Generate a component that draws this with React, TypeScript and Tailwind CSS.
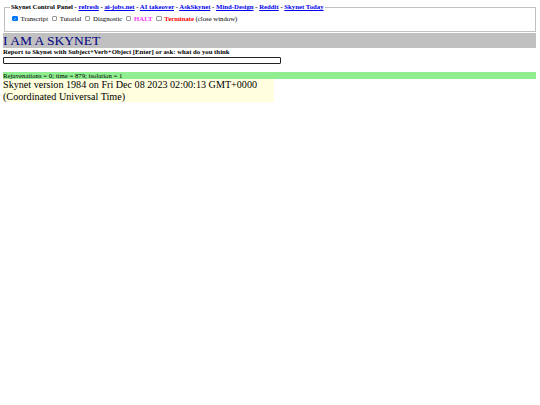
function Box({ checked = false, className = "" }: { checked?: boolean; className?: string }) {
  return (
    <span className={`inline-flex items-center justify-center shrink-0 w-[5.5px] h-[5.5px] rounded-[1px] border-[0.5px] ${checked ? "bg-[#0075ff] border-[#0075ff]" : "bg-white border-[#999999]"} ${className}`}>
      {checked && (
        <svg viewBox="0 0 12 12" className="w-[5.5px] h-[5.5px]">
          <path d="M2.5 6.5 L5 9 L9.5 3.5" fill="none" stroke="white" strokeWidth="2" />
        </svg>
      )}
    </span>
  );
}

export default function App() {
  const link = "text-[#0000ee] underline";
  return (
    <div className="min-h-[405px] bg-white text-black font-['Liberation_Serif',serif] text-[6.76px] leading-[8px] pl-[3px] pr-[4px] pt-[3px]">
      <fieldset className="border border-[#c0c0c0] h-[29px] ml-[1px] px-[5px] m-0">
        <legend className="font-bold px-[1px] leading-[8px]">
          Skynet Control Panel - <a className={link}>refresh</a> - <a className={link}>ai-jobs.net</a> - <a className={link}>AI takeover</a> - <a className={link}>AskSkynet</a> - <a className={link}>Mind-Design</a> - <a className={link}>Reddit</a> - <a className={link}>Skynet Today</a>
        </legend>
        <div className="flex items-center h-[9px] mt-[3px] whitespace-nowrap">
          <Box checked className="ml-[2px] mr-[3px]" />
          <span>Transcript</span>
          <Box className="ml-[3.5px] mr-[2.75px]" />
          <span>Tutorial</span>
          <Box className="ml-[3.5px] mr-[2.75px]" />
          <span>Diagnostic</span>
          <Box className="ml-[3.5px] mr-[2.75px]" />
          <span className="font-bold text-[#ff33ff]">HALT</span>
          <Box className="ml-[3.5px] mr-[2.75px]" />
          <span className="font-bold text-[#ff0000] mr-[1.5px]">Terminate</span>
          <span>(close window)</span>
        </div>
      </fieldset>
      <div className="bg-[#c0c0c0] text-[#000080] text-[13.5px] leading-[15px] h-[15px] mt-[1px]">I AM A SKYNET</div>
      <div className="font-bold leading-[8px]">Report to Skynet with Subject+Verb+Object [Enter] or ask: what do you think</div>
      <div className="w-[278px] h-[7px] border border-[#222] rounded-[1px] mt-[1px]"></div>
      <div className="bg-[#90ee90] leading-[7px] h-[7px] mt-[8px]">Rejuvenations = 0; time = 879; isolation = 1</div>
      <div className="bg-[#ffffe0] w-[271px] text-[10.14px] leading-[11.5px] h-[23px]">Skynet version 1984 on Fri Dec 08 2023 02:00:13 GMT+0000 (Coordinated Universal Time)</div>
    </div>
  );
}
